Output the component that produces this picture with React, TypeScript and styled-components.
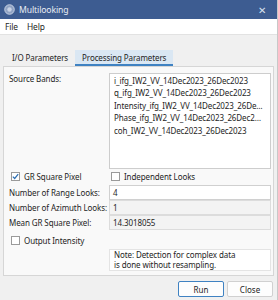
import React from 'react';
import styled, { createGlobalStyle } from 'styled-components';

const Global = createGlobalStyle`
  html, body { margin: 0; padding: 0; }
  body {
    width: 278px;
    height: 300px;
    overflow: hidden;
    font-family: "Noto Sans", "Open Sans", sans-serif;
    font-size: 8px;
    letter-spacing: -0.1px;
    color: #1e1e1e;
    background: #f0f0f0;
  }
`;

const Window = styled.div`
  width: 278px;
  height: 300px;
  display: flex;
  flex-direction: column;
  box-sizing: border-box;
  border-right: 1px solid #c8c8c8;
  background: #f0f0f0;
  white-space: nowrap;
`;

const TitleBar = styled.div`
  height: 19px;
  background: #3d5c91;
  display: flex;
  align-items: center;
  padding: 0 4px;
  color: #e8ecf4;
  font-size: 8.6px;
  gap: 4px;
`;

const Title = styled.span`
  flex: 1;
`;

const CloseX = styled.span`
  font-size: 10px;
  color: #d8e0ee;
  margin-right: 7px;
`;

const MenuBar = styled.div`
  height: 15px;
  background: #fff;
  display: flex;
  align-items: center;
  gap: 9px;
  padding: 0 5px;
  border-bottom: 1px solid #e2e2e2;
  font-size: 8.4px;
`;

const Body = styled.div`
  flex: 1;
  display: flex;
  flex-direction: column;
  padding: 15px 3px 0 3px;
`;

const Tabs = styled.div`
  display: flex;
  height: 16px;
  padding-left: 2px;
`;

const Tab = styled.div<{ $active?: boolean }>`
  padding: 0 7px;
  display: flex;
  align-items: center;
  box-sizing: border-box;
  background: ${p => (p.$active ? '#dae7f3' : 'transparent')};
  border-bottom: 2px solid ${p => (p.$active ? '#3f82c2' : 'transparent')};
`;

const Panel = styled.div`
  height: 210px;
  box-sizing: border-box;
  border: 1px solid #d6d6d6;
  background: #f9f9f9;
  padding: 6px 2px 0 5px;
  display: flex;
  flex-direction: column;
`;

const Row = styled.div`
  display: flex;
  align-items: center;
  height: 15px;
`;

const Label = styled.div`
  width: 100px;
  flex: none;
`;

const SourceRow = styled.div`
  display: flex;
  align-items: flex-start;
  height: 96px;
`;

const ListBox = styled.div`
  flex: 1;
  min-width: 0;
  height: 96px;
  box-sizing: border-box;
  background: #fff;
  border: 1px solid #cdcdcd;
  padding: 1px 0 0 4px;
  line-height: 12.4px;
  overflow: hidden;
`;

const ListItem = styled.div`
  overflow: hidden;
  text-overflow: ellipsis;
  padding-right: 6px;
`;

const CheckRow = styled.div<{ $gap: number }>`
  display: flex;
  align-items: center;
  height: 13px;
  margin-top: ${p => p.$gap}px;
`;

const Check = styled.label`
  display: flex;
  align-items: center;
  gap: 4px;
  width: 100px;
  flex: none;
  padding-left: 2px;
  box-sizing: border-box;
`;

const Box = styled.span`
  width: 9px;
  height: 9px;
  box-sizing: border-box;
  border: 1px solid #9a9a9a;
  background: #fff;
  display: flex;
  align-items: center;
  justify-content: center;
`;

const Fields = styled.div`
  margin-top: 2px;
  display: flex;
  flex-direction: column;
`;

const Field = styled.div<{ $disabled?: boolean }>`
  flex: 1;
  height: 15px;
  box-sizing: border-box;
  border: 1px solid ${p => (p.$disabled ? '#dcdcdc' : '#d0d0d0')};
  background: ${p => (p.$disabled ? '#f3f3f3' : '#fff')};
  display: flex;
  align-items: center;
  padding-left: 3px;
`;

const NoteRow = styled.div`
  display: flex;
  margin-top: 2px;
`;

const Note = styled.div`
  margin-left: 100px;
  flex: 1;
  background: #fff;
  border: 1px solid #e4e4e4;
  padding: 0 4px;
  line-height: 10px;
`;

const Buttons = styled.div`
  display: flex;
  justify-content: flex-end;
  gap: 3px;
  padding: 5px 1px 0 0;
`;

const Button = styled.button<{ $primary?: boolean }>`
  width: 46px;
  height: 16px;
  font: inherit;
  color: #1e1e1e;
  background: #fdfdfd;
  border: 1px solid ${p => (p.$primary ? '#3f82c2' : '#d0d0d0')};
  border-radius: 2px;
  padding: 0;
`;

const Tick = () => (
  <svg width="7" height="7" viewBox="0 0 7 7">
    <path d="M0.8 3.6 L2.7 5.5 L6.2 1.2" fill="none" stroke="#2d6fb3" strokeWidth="1.2" />
  </svg>
);

const AppIcon = () => (
  <svg width="11" height="11" viewBox="0 0 11 11">
    <circle cx="5.5" cy="5.5" r="4.8" fill="#8fa2c3" stroke="#d6deec" strokeWidth="0.8" />
    <circle cx="5.5" cy="5.5" r="2.2" fill="#c9d3e6" />
  </svg>
);

const bands = [
  'i_ifg_IW2_VV_14Dec2023_26Dec2023',
  'q_ifg_IW2_VV_14Dec2023_26Dec2023',
  'Intensity_ifg_IW2_VV_14Dec2023_26Dec2023',
  'Phase_ifg_IW2_VV_14Dec2023_26Dec2023',
  'coh_IW2_VV_14Dec2023_26Dec2023',
];

const App = () => {
  return (
    <>
      <Global />
      <Window>
        <TitleBar>
          <AppIcon />
          <Title>Multilooking</Title>
          <CloseX>✕</CloseX>
        </TitleBar>
        <MenuBar>
          <span>File</span>
          <span>Help</span>
        </MenuBar>
        <Body>
          <Tabs>
            <Tab>I/O Parameters</Tab>
            <Tab $active>Processing Parameters</Tab>
          </Tabs>
          <Panel>
            <SourceRow>
              <Label>Source Bands:</Label>
              <ListBox>
                {bands.map(b => (
                  <ListItem key={b}>{b}</ListItem>
                ))}
              </ListBox>
            </SourceRow>
            <CheckRow $gap={1}>
              <Check><Box><Tick /></Box>GR Square Pixel</Check>
              <Check><Box />Independent Looks</Check>
            </CheckRow>
            <Fields>
              <Row>
                <Label>Number of Range Looks:</Label>
                <Field>4</Field>
              </Row>
              <Row>
                <Label>Number of Azimuth Looks:</Label>
                <Field $disabled>1</Field>
              </Row>
              <Row>
                <Label>Mean GR Square Pixel:</Label>
                <Field $disabled>14.3018055</Field>
              </Row>
            </Fields>
            <CheckRow $gap={4}>
              <Check><Box />Output Intensity</Check>
            </CheckRow>
            <NoteRow>
              <Note>
                Note: Detection for complex data
                <br />
                is done without resampling.
              </Note>
            </NoteRow>
          </Panel>
          <Buttons>
            <Button $primary>Run</Button>
            <Button>Close</Button>
          </Buttons>
        </Body>
      </Window>
    </>
  );
};

export default App;
